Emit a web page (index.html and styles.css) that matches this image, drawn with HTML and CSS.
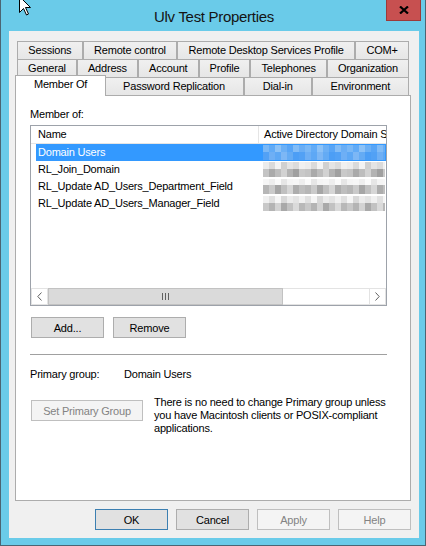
FILE: index.html
```html
<!DOCTYPE html>
<html lang="en">
<head>
    <meta charset="UTF-8">
    <title>Ulv Test Properties</title>
    <link rel="stylesheet" href="styles.css">
</head>
<body>
    <div class="window">
        <svg class="cursor" width="14" height="22" viewBox="0 0 14 22">
            <polygon points="0.5,0.5 0.5,16.5 4.5,12.5 7.5,19 9.5,18 6.5,11.5 11.5,11.5" fill="#fff" stroke="#000" stroke-width="1"/>
        </svg>

        <div class="titlebar">
            <span></span>
            <div class="title">Ulv Test Properties</div>
            <div class="close">
                <svg width="10" height="8" viewBox="0 0 10 8">
                    <path d="M1 0.5 L9 7.5 M9 0.5 L1 7.5" stroke="#000" stroke-width="2.2"/>
                </svg>
            </div>
        </div>

        <div class="client">
            <div class="tabs">
                <div class="tab-row">
                    <div class="tab">Sessions</div>
                    <div class="tab">Remote control</div>
                    <div class="tab">Remote Desktop Services Profile</div>
                    <div class="tab">COM+</div>
                </div>
                <div class="tab-row">
                    <div class="tab">General</div>
                    <div class="tab">Address</div>
                    <div class="tab">Account</div>
                    <div class="tab">Profile</div>
                    <div class="tab">Telephones</div>
                    <div class="tab">Organization</div>
                </div>
                <div class="tab-row">
                    <div class="tab active">Member Of</div>
                    <div class="tab">Password Replication</div>
                    <div class="tab">Dial-in</div>
                    <div class="tab">Environment</div>
                </div>
            </div>

            <div class="panel">
                <div class="label">Member of:</div>

                <div class="listview">
                    <div class="lv-header">
                        <div class="col-name">Name</div>
                        <div class="col-folder">Active Directory Domain Services Folder</div>
                    </div>
                    <div class="lv-body">
                        <div class="lv-row selected">
                            <div class="col-name">Domain Users</div>
                            <span class="px px-sel"></span>
                        </div>
                        <div class="lv-row">
                            <div class="col-name">RL_Join_Domain</div>
                            <span class="px px-a"></span>
                        </div>
                        <div class="lv-row">
                            <div class="col-name">RL_Update AD_Users_Department_Field</div>
                            <span class="px px-b"></span>
                        </div>
                        <div class="lv-row">
                            <div class="col-name">RL_Update AD_Users_Manager_Field</div>
                            <span class="px px-c"></span>
                        </div>
                    </div>
                    <div class="hscroll">
                        <div class="sb-btn">
                            <svg width="5" height="9" viewBox="0 0 5 9"><path d="M4.5 0.5 L0.8 4.5 L4.5 8.5" fill="none" stroke="#606060"/></svg>
                        </div>
                        <div class="sb-thumb"><i></i><i></i><i></i></div>
                        <div class="sb-track"></div>
                        <div class="sb-btn">
                            <svg width="5" height="9" viewBox="0 0 5 9"><path d="M0.5 0.5 L4.2 4.5 L0.5 8.5" fill="none" stroke="#606060"/></svg>
                        </div>
                    </div>
                </div>

                <div class="btn-row">
                    <button class="btn">Add...</button>
                    <button class="btn">Remove</button>
                </div>

                <div class="separator"></div>

                <div class="primary">
                    <span class="primary-label">Primary group:</span>
                    <span>Domain Users</span>
                </div>

                <div class="set-primary">
                    <button class="btn btn-wide" disabled>Set Primary Group</button>
                    <p class="note">There is no need to change Primary group unless<br>you have Macintosh clients or POSIX-compliant<br>applications.</p>
                </div>
            </div>

            <div class="footer">
                <button class="btn default">OK</button>
                <button class="btn">Cancel</button>
                <button class="btn" disabled>Apply</button>
                <button class="btn" disabled>Help</button>
            </div>
        </div>
    </div>
</body>
</html>
```

FILE: styles.css
```css
* {
    margin: 0;
    padding: 0;
    box-sizing: border-box;
}

body {
    font-family: 'Liberation Sans', Arial, sans-serif;
    font-size: 11px;
    letter-spacing: -0.2px;
    color: #000;
    background: #fff;
}

.window {
    position: relative;
    width: 426px;
    height: 546px;
    background: #6acbe9;
    border: solid #4b6573;
    border-width: 0 1px 1px 1px;
    padding: 0 6px 7px 8px;
    display: flex;
    flex-direction: column;
    overflow: hidden;
}

.cursor {
    position: absolute;
    left: 18px;
    top: -4px;
    z-index: 5;
}

/* title bar */
.titlebar {
    height: 31px;
    display: grid;
    grid-template-columns: 1fr auto 1fr;
    align-items: start;
}

.title {
    padding-top: 8px;
    font-size: 15px;
    line-height: 17px;
    letter-spacing: -0.3px;
    color: #141414;
}

.close {
    justify-self: end;
    margin-right: -2px;
    width: 35px;
    height: 21px;
    background: #c75050;
    border: 1px solid #9c3a3a;
    border-top: none;
    display: flex;
    align-items: center;
    justify-content: center;
}

/* client area */
.client {
    flex: 1;
    background: #f0f0f0;
    padding: 10px 8px 0 6px;
    display: flex;
    flex-direction: column;
}

.tabs {
    display: flex;
    flex-direction: column;
}

.tab-row {
    display: flex;
    padding: 0 2px;
}

.tab {
    flex: 1 1 auto;
    height: 18px;
    padding: 0 3px;
    border: 1px solid #acacac;
    border-bottom: none;
    background: linear-gradient(#f0f0f0, #e6e6e6);
    line-height: 17px;
    text-align: center;
    white-space: nowrap;
}

.tab.active {
    position: relative;
    z-index: 2;
    height: 21px;
    margin: -2px -2px -1px -2px;
    background: #fff;
    line-height: 16px;
}

.panel {
    position: relative;
    height: 406px;
    background: #fff;
    border: 1px solid #acacac;
    padding: 12px 14px 0 14px;
}

.label {
    line-height: 13px;
    margin-bottom: 4px;
}

/* list view */
.listview {
    width: 357px;
    height: 181px;
    border: 1px solid #9da2aa;
    display: flex;
    flex-direction: column;
    overflow: hidden;
}

.lv-header {
    display: flex;
    height: 18px;
    border-bottom: 1px solid #e5e5e5;
    line-height: 17px;
    white-space: nowrap;
}

.lv-header .col-name {
    width: 228px;
    padding-left: 7px;
    border-right: 1px solid #e5e5e5;
}

.lv-header .col-folder {
    flex: 1;
    padding-left: 5px;
    overflow: hidden;
}

.lv-body {
    flex: 1;
    padding-left: 5px;
}

.lv-row {
    display: flex;
    height: 17px;
    line-height: 17px;
    white-space: nowrap;
}

.lv-row .col-name {
    width: 223px;
    padding-left: 2px;
}

.lv-row.selected {
    background: #3399ff;
    color: #fff;
}

/* blocky placeholder for hidden folder paths */
.px {
    display: block;
    width: 122px;
    height: 15px;
    margin: 1px 0 0 4px;
}

.px-sel {
    background:
        repeating-linear-gradient(90deg, #7ab8f6 0 6px, #62abf6 6px 12px, #8cc2f7 12px 18px, #6cb0f5 18px 24px, #58a5f6 24px 30px, #82bcf6 30px 36px, #6aaef5 36px 42px) top / 100% 7px no-repeat,
        repeating-linear-gradient(90deg, #52a1f5 0 6px, #6eaff5 6px 12px, #5ea8f5 12px 18px, #7db7f5 18px 24px, #64abf4 24px 30px, #4c9ef5 30px 36px) bottom / 100% 8px no-repeat;
}

.px-a {
    background:
        repeating-linear-gradient(90deg, #ececec 0 6px, #dadada 6px 12px, #f3f3f3 12px 18px, #d0d0d0 18px 24px, #e4e4e4 24px 30px, #dbdbdb 30px 36px, #f0f0f0 36px 42px) top / 100% 7px no-repeat,
        repeating-linear-gradient(90deg, #c4c4c4 0 6px, #aaaaaa 6px 12px, #bdbdbd 12px 18px, #d2d2d2 18px 24px, #b3b3b3 24px 30px, #a0a0a0 30px 36px, #c9c9c9 36px 42px) bottom / 100% 8px no-repeat;
}

.px-b {
    background:
        repeating-linear-gradient(90deg, #f6f6f6 0 6px, #eeeeee 6px 12px, #fafafa 12px 18px, #e6e6e6 18px 24px, #f4f4f4 24px 30px) top / 100% 6px no-repeat,
        repeating-linear-gradient(90deg, #b6b6b6 0 6px, #cacaca 6px 12px, #a6a6a6 12px 18px, #c0c0c0 18px 24px, #d6d6d6 24px 30px, #adadad 30px 36px, #bebebe 36px 42px) bottom / 100% 9px no-repeat;
}

.px-c {
    background:
        repeating-linear-gradient(90deg, #f0f0f0 0 6px, #e0e0e0 6px 12px, #f5f5f5 12px 18px, #d8d8d8 18px 24px, #ebebeb 24px 30px, #e3e3e3 30px 36px) top / 100% 7px no-repeat,
        repeating-linear-gradient(90deg, #c8c8c8 0 6px, #b4b4b4 6px 12px, #d3d3d3 12px 18px, #a9a9a9 18px 24px, #c2c2c2 24px 30px, #dadada 30px 36px, #b8b8b8 36px 42px) bottom / 100% 8px no-repeat;
}

/* horizontal scroll bar */
.hscroll {
    display: flex;
    height: 17px;
    background: #fff;
}

.sb-btn {
    width: 17px;
    border: 1px solid #e3e3e3;
    display: flex;
    align-items: center;
    justify-content: center;
}

.sb-thumb {
    width: 235px;
    background: #dadada;
    border: 1px solid #c2c2c2;
    display: flex;
    align-items: center;
    justify-content: center;
    gap: 2px;
}

.sb-thumb i {
    width: 1px;
    height: 7px;
    background: #606060;
}

.sb-track {
    flex: 1;
    border-top: 1px solid #e3e3e3;
    border-bottom: 1px solid #e3e3e3;
}

/* buttons */
.btn {
    width: 73px;
    height: 21px;
    font: inherit;
    letter-spacing: inherit;
    color: #000;
    background: #e1e1e1;
    border: 1px solid #adadad;
}

.btn:disabled {
    color: #838383;
    background: #f4f4f4;
    border-color: #bfbfbf;
}

.btn.default {
    border-color: #3c7fb1;
}

.btn-wide {
    width: 112px;
}

.btn-row {
    display: flex;
    gap: 9px;
    margin: 11px 0 0 1px;
}

.separator {
    height: 1px;
    margin-top: 16px;
    width: 357px;
    background: #a0a0a0;
}

.primary {
    display: flex;
    margin-top: 13px;
    line-height: 13px;
}

.primary-label {
    width: 94px;
}

.set-primary {
    display: flex;
    align-items: flex-start;
    gap: 11px;
    margin: 15px 0 0 1px;
}

.set-primary .btn {
    margin-top: 4px;
}

.note {
    line-height: 13px;
}

.footer {
    display: flex;
    justify-content: flex-end;
    gap: 8px;
    margin-top: 8px;
}
```
